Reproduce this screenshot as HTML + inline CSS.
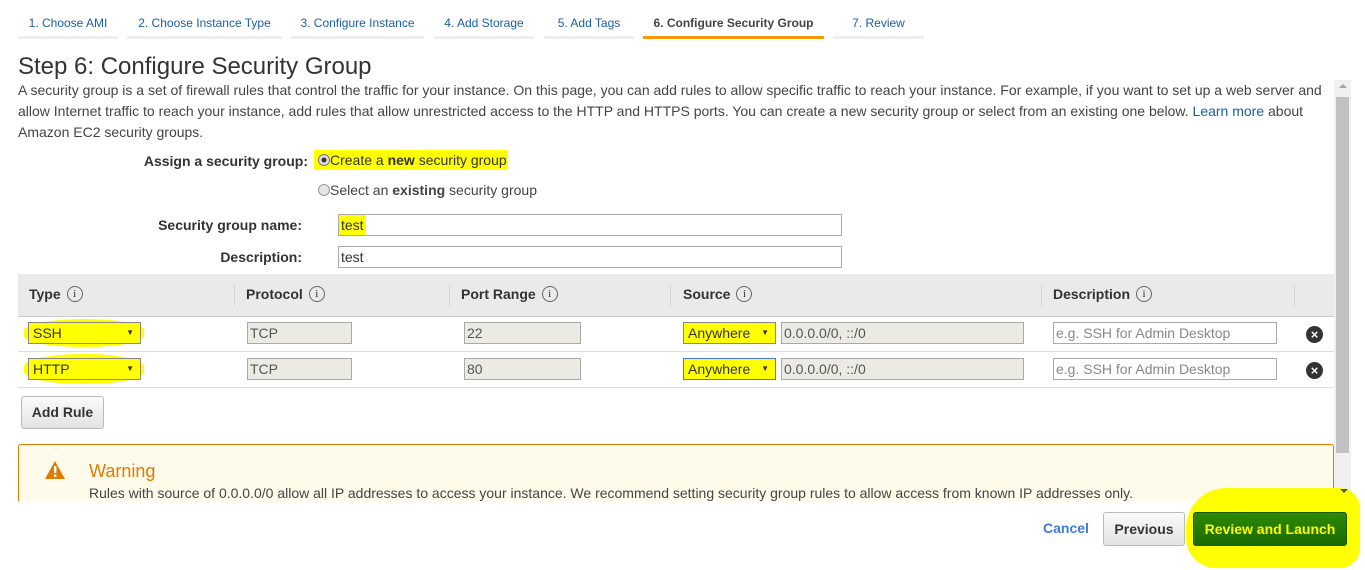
<!DOCTYPE html>
<html><head><style>
body{margin:0;width:1365px;height:570px;background:#fff;font-family:"Liberation Sans",Arial,sans-serif;color:#444;position:relative;overflow:hidden}
.a{position:absolute}
.tab{position:absolute;top:8px;height:31px;border-bottom:3px solid #eee;font-size:12px;color:#1a5fa6;line-height:31px;text-align:center;box-sizing:border-box}
.lbl{position:absolute;font-weight:bold;font-size:14px;color:#333;text-align:right}
.inp{position:absolute;border:1px solid #aaa;background:#fff;font-size:14px;box-sizing:border-box;height:22px;line-height:20px;padding-left:2px;color:#333}
.gray{background:#ebebe4;border-color:#a9a9a9;color:#555}
.yl{background:#ffff00}
.th{position:absolute;top:286px;font-weight:bold;font-size:14px;color:#333;line-height:16px}
.i{display:inline-block;width:14px;height:14px;border:1px solid #666;border-radius:50%;font-size:11px;line-height:14px;text-align:center;font-weight:normal;margin-left:6px;vertical-align:top;font-family:"Liberation Serif",serif}
.sep{position:absolute;top:284px;width:1px;height:22px;background:#d5d5d5}
.sel{position:absolute;height:22px;border:1px solid #888;background:#ffff00;font-size:14px;line-height:20px;padding-left:4px;box-sizing:border-box;color:#333}
.sel:after{content:"▼";position:absolute;right:6px;top:0;font-size:8px}
.x{position:absolute;width:17px;height:17px;border-radius:50%;background:#333;color:#fff;font-size:13px;font-weight:bold;text-align:center;line-height:17px}
</style></head><body>
<div class="tab" style="left:18px;width:100px">1. Choose AMI</div>
<div class="tab" style="left:127px;width:155px">2. Choose Instance Type</div>
<div class="tab" style="left:291px;width:133px">3. Configure Instance</div>
<div class="tab" style="left:434px;width:100px">4. Add Storage</div>
<div class="tab" style="left:544px;width:90px">5. Add Tags</div>
<div class="tab" style="left:643px;width:181px;border-bottom-color:#f90;color:#444;font-weight:bold">6. Configure Security Group</div>
<div class="tab" style="left:833px;width:91px">7. Review</div>

<div class="a" style="left:18px;top:53px;font-size:24px;color:#333">Step 6: Configure Security Group</div>
<div class="a" style="left:18px;top:80px;width:1310px;font-size:14px;line-height:21px;color:#444">A security group is a set of firewall rules that control the traffic for your instance. On this page, you can add rules to allow specific traffic to reach your instance. For example, if you want to set up a web server and allow Internet traffic to reach your instance, add rules that allow unrestricted access to the HTTP and HTTPS ports. You can create a new security group or select from an existing one below. <span style="color:#1a5fa6">Learn more</span> about Amazon EC2 security groups.</div>

<div class="lbl" style="right:1057px;top:153px">Assign a security group:</div>
<div class="a yl" style="left:314px;top:150px;width:194px;height:20px"></div>
<div class="a" style="left:318px;top:152px;font-size:14px;color:#333"><span style="display:inline-block;width:10px;height:10px;border:1px solid #777;border-radius:50%;background:radial-gradient(#333 30%,#ddd 40%);vertical-align:-1px"></span>Create a <b>new</b> security group</div>
<div class="a" style="left:318px;top:182px;font-size:14px;color:#444"><span style="display:inline-block;width:10px;height:10px;border:1px solid #999;border-radius:50%;background:#e6e6e6;vertical-align:-1px"></span>Select an <b>existing</b> security group</div>

<div class="lbl" style="right:1063px;top:217px">Security group name:</div>
<div class="inp" style="left:338px;top:214px;width:504px"><span class="yl" style="display:inline-block;padding:0 2px;margin-left:-2px">test</span></div>
<div class="lbl" style="right:1063px;top:249px">Description:</div>
<div class="inp" style="left:338px;top:246px;width:504px">test</div>

<div class="a" style="left:18px;top:274px;width:1316px;height:42px;background:#eaeaea;border-bottom:1px solid #ccc"></div>
<div class="th" style="left:29px">Type<span class="i">i</span></div>
<div class="sep" style="left:234px"></div>
<div class="th" style="left:246px">Protocol<span class="i">i</span></div>
<div class="sep" style="left:449px"></div>
<div class="th" style="left:461px">Port Range<span class="i">i</span></div>
<div class="sep" style="left:670px"></div>
<div class="th" style="left:683px">Source<span class="i">i</span></div>
<div class="sep" style="left:1041px"></div>
<div class="th" style="left:1053px">Description<span class="i">i</span></div>
<div class="sep" style="left:1294px"></div>

<div class="a" style="left:18px;top:351px;width:1316px;height:1px;background:#ddd"></div>
<div class="a" style="left:18px;top:387px;width:1316px;height:1px;background:#ddd"></div>

<div class="a yl" style="left:24px;top:319px;width:120px;height:28px;border-radius:50%/40%"></div>
<div class="a yl" style="left:24px;top:354px;width:120px;height:30px;border-radius:50%/40%"></div>
<div class="sel" style="left:28px;top:322px;width:113px">SSH</div>
<div class="sel" style="left:28px;top:358px;width:113px">HTTP</div>
<div class="inp gray" style="left:247px;top:322px;width:105px">TCP</div>
<div class="inp gray" style="left:247px;top:358px;width:105px">TCP</div>
<div class="inp gray" style="left:464px;top:322px;width:117px">22</div>
<div class="inp gray" style="left:464px;top:358px;width:117px">80</div>
<div class="sel" style="left:683px;top:322px;width:93px">Anywhere</div>
<div class="sel" style="left:683px;top:358px;width:93px;border-color:#4a7bd0">Anywhere</div>
<div class="inp gray" style="left:781px;top:322px;width:243px">0.0.0.0/0, ::/0</div>
<div class="inp gray" style="left:781px;top:358px;width:243px">0.0.0.0/0, ::/0</div>
<div class="inp" style="left:1053px;top:322px;width:224px;color:#888">e.g. SSH for Admin Desktop</div>
<div class="inp" style="left:1053px;top:358px;width:224px;color:#888">e.g. SSH for Admin Desktop</div>
<div class="x" style="left:1306px;top:326px">×</div>
<div class="x" style="left:1306px;top:362px">×</div>

<div class="a" style="left:21px;top:396px;width:81px;height:31px;border:1px solid #bbb;border-radius:3px;background:linear-gradient(#fafafa,#e3e3e3);font-weight:bold;font-size:14px;color:#333;text-align:center;line-height:31px">Add Rule</div>

<div class="a" style="left:18px;top:444px;width:1314px;height:80px;border:1px solid #e07b00;border-radius:3px;background:#fffbeb"></div>
<div class="a" style="left:0;top:501px;width:1334px;height:69px;background:#fff"></div>
<svg class="a" style="left:45px;top:461px" width="20" height="18" viewBox="0 0 20 18"><path d="M10 0L20 18H0Z" fill="#e07b00"/><rect x="9" y="5" width="2.4" height="7" fill="#fff"/><rect x="9" y="13.5" width="2.4" height="2.4" fill="#fff"/></svg>
<div class="a" style="left:89px;top:461px;font-size:18px;color:#e07b00">Warning</div>
<div class="a" style="left:89px;top:485px;font-size:14px;color:#444;height:16px;overflow:hidden;white-space:nowrap">Rules with source of 0.0.0.0/0 allow all IP addresses to access your instance. We recommend setting security group rules to allow access from known IP addresses only.</div>

<div class="a" style="left:1334px;top:80px;width:17px;height:420px;background:#f0f0f0"></div>
<div class="a" style="left:1336px;top:97px;width:13px;height:356px;background:#c1c1c1"></div>
<div class="a" style="left:1339px;top:84px;width:0;height:0;border:4px solid transparent;border-bottom-color:#a3a3a3;border-top:0"></div>

<div class="a yl" style="left:1186px;top:488px;width:174px;height:80px;border-radius:40px 20px 20px 30px"></div>
<div class="a" style="left:1340px;top:489px;width:0;height:0;border:4px solid transparent;border-top-color:#555;border-bottom:0"></div>
<div class="a" style="left:1043px;top:520px;font-weight:bold;font-size:14px;color:#3b7cd6">Cancel</div>
<div class="a" style="left:1103px;top:512px;width:80px;height:32px;border:1px solid #bbb;border-radius:3px;background:linear-gradient(#fafafa,#e3e3e3);font-weight:bold;font-size:14px;color:#333;text-align:center;line-height:32px">Previous</div>
<div class="a" style="left:1193px;top:512px;width:152px;height:32px;border:1px solid #1c5a00;border-radius:3px;background:linear-gradient(#2c8a08,#1b6a00);font-weight:bold;font-size:14px;color:#ffff00;text-align:center;line-height:32px">Review and Launch</div>
</body></html>
